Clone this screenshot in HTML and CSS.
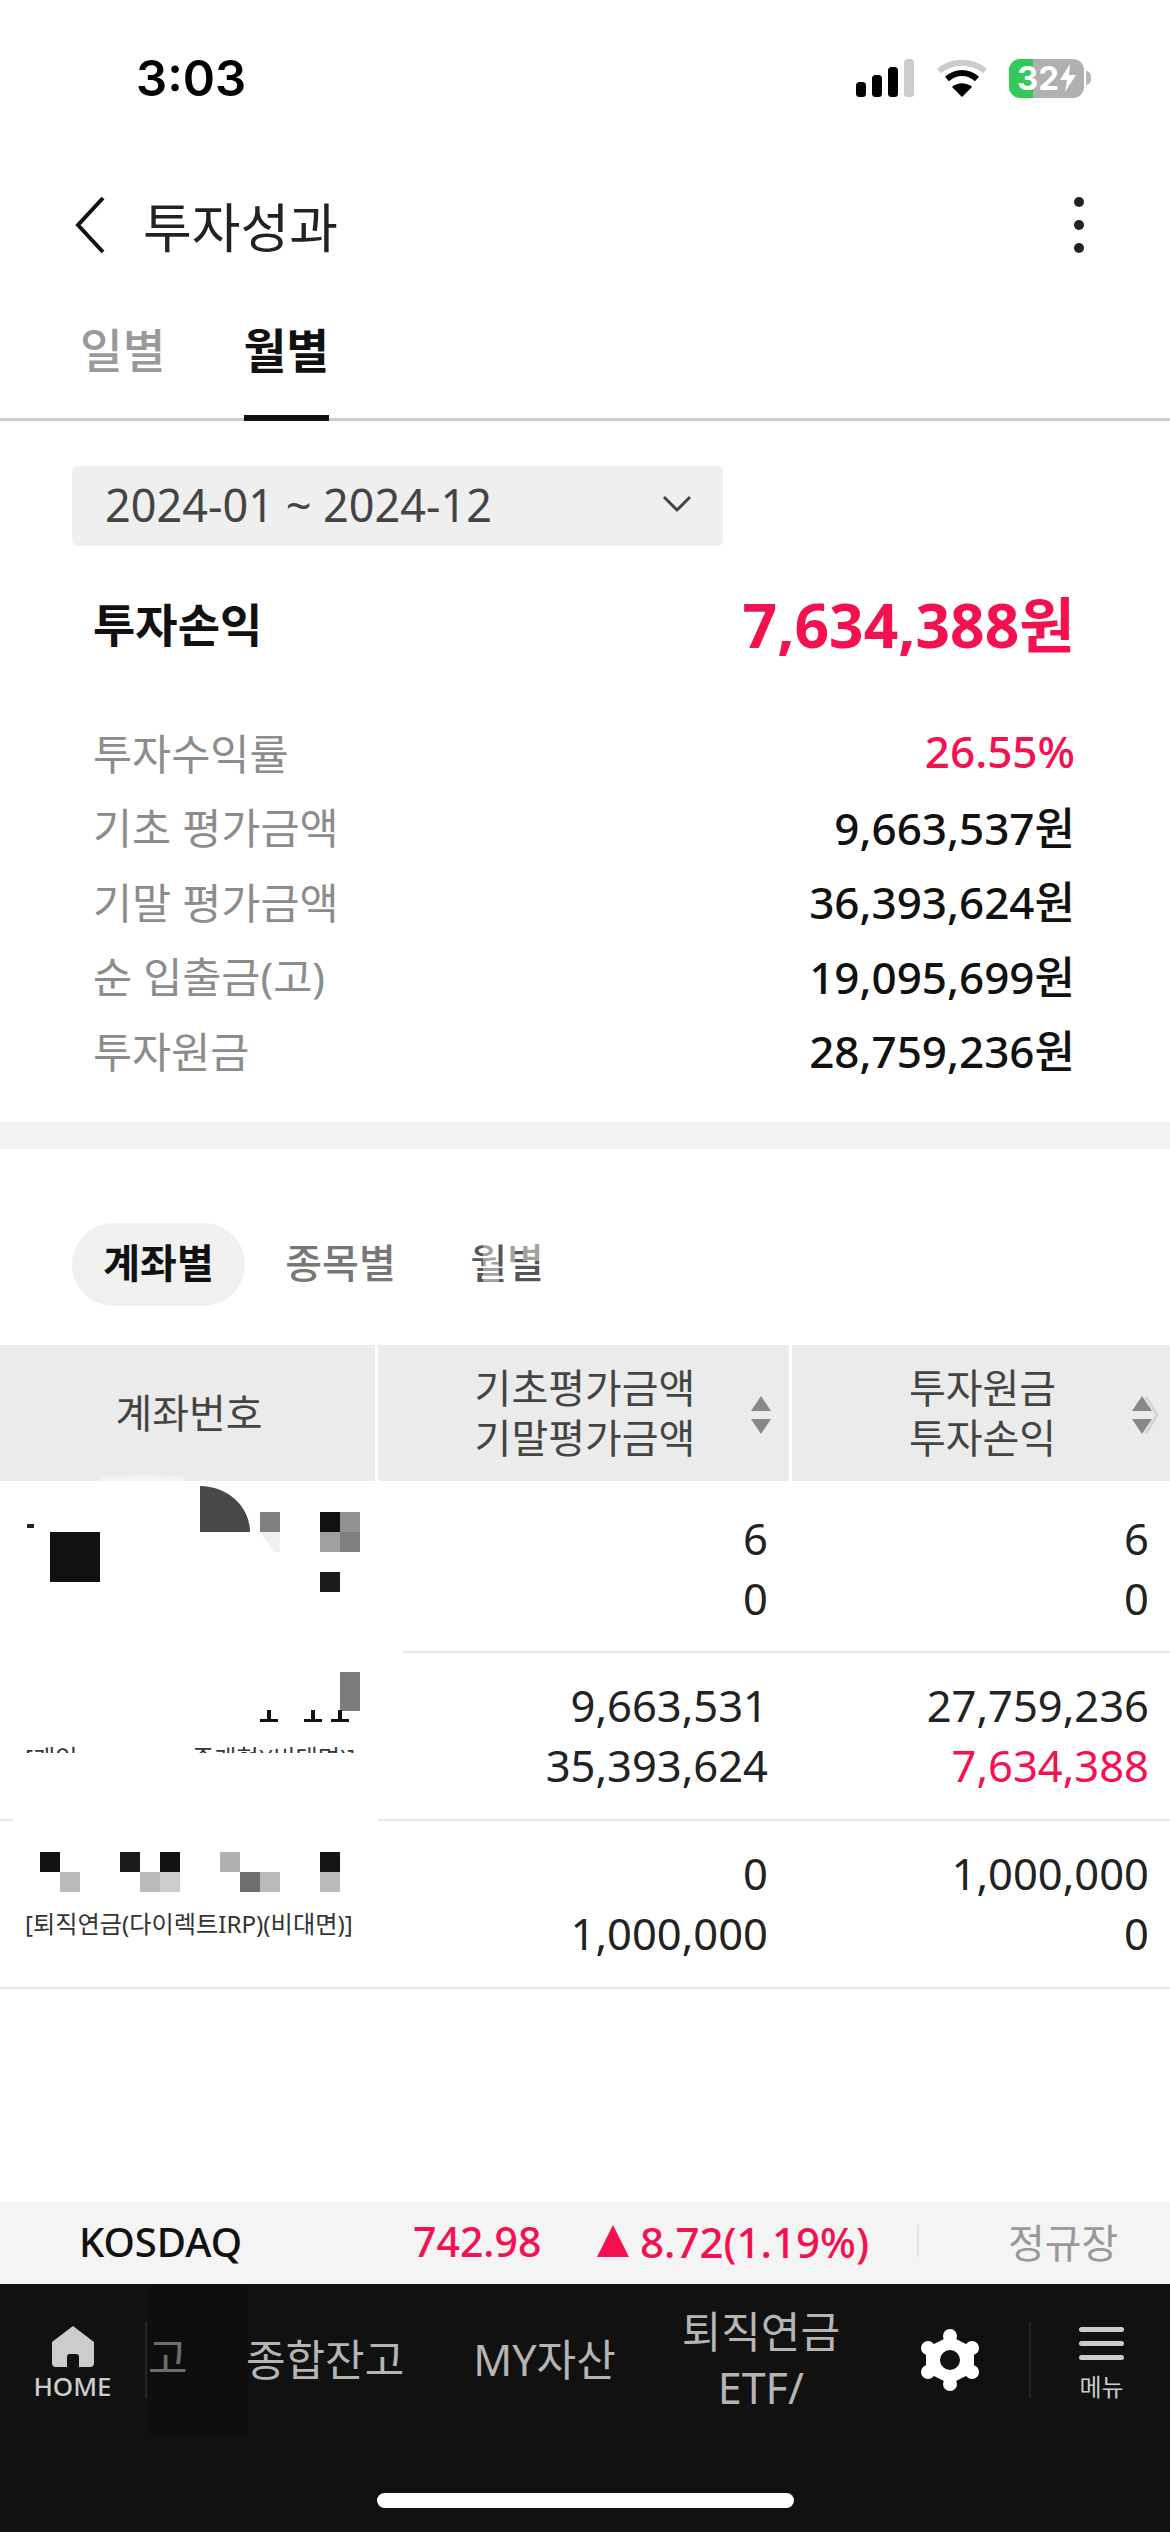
FILE: index.html
```html
<!DOCTYPE html>
<html lang="ko">
<head>
    <meta charset="UTF-8">
    <title>투자성과</title>
    <link rel="stylesheet" href="styles.css">
</head>
<body>
    <div class="status-bar">
        <span class="time">3:03</span>
        <div class="status-icons">
            <svg class="signal" width="58" height="38" viewBox="0 0 58 38">
                <rect x="0" y="23" width="10" height="15" rx="3.5" fill="#000"/>
                <rect x="16" y="16" width="10" height="22" rx="3.5" fill="#000"/>
                <rect x="32" y="8" width="10" height="30" rx="3.5" fill="#000"/>
                <rect x="48" y="0" width="10" height="38" rx="3.5" fill="#ccc"/>
            </svg>
            <svg class="wifi" width="50" height="38" viewBox="0 0 50 38">
                <path d="M2 12 C15 1 35 1 48 12" fill="none" stroke="#ccc" stroke-width="6"/>
                <path d="M10 20 C19 12 31 12 40 20" fill="none" stroke="#000" stroke-width="6"/>
                <path d="M25 38 L15 28 C21 23 29 23 35 28 Z" fill="#000"/>
            </svg>
            <div class="battery">
                <span class="battery-text">32</span>
                <svg width="16" height="28" viewBox="0 0 16 28"><path d="M10 0 L0 16 H7 L5 28 L16 11 H9 Z" fill="#fff"/></svg>
            </div>
            <span class="battery-nub"></span>
        </div>
    </div>

    <header class="top-bar">
        <svg class="back" width="34" height="60" viewBox="0 0 34 60">
            <path d="M30 3 L5 30 L30 57" fill="none" stroke="#111" stroke-width="4"/>
        </svg>
        <h1>투자성과</h1>
        <div class="more"><i></i><i></i><i></i></div>
    </header>

    <nav class="tabs">
        <a>일별</a>
        <a class="active">월별</a>
    </nav>

    <section class="summary">
        <div class="period">
            <span>2024-01 ~ 2024-12</span>
            <svg width="30" height="18" viewBox="0 0 30 18"><path d="M2 2 L15 15 L28 2" fill="none" stroke="#444" stroke-width="3"/></svg>
        </div>
        <div class="profit">
            <span class="profit-label">투자손익</span>
            <span class="profit-value">7,634,388원</span>
        </div>
        <dl class="details">
            <div><dt>투자수익률</dt><dd class="up">26.55%</dd></div>
            <div><dt>기초 평가금액</dt><dd>9,663,537원</dd></div>
            <div><dt>기말 평가금액</dt><dd>36,393,624원</dd></div>
            <div><dt>순 입출금(고)</dt><dd>19,095,699원</dd></div>
            <div><dt>투자원금</dt><dd>28,759,236원</dd></div>
        </dl>
    </section>

    <div class="band"></div>

    <section class="breakdown">
        <div class="pills">
            <span class="pill active">계좌별</span>
            <span class="pill">종목별</span>
            <span class="pill pill-pixel">월별<i class="px-a"></i><i class="px-b"></i><i class="px-c"></i></span>
        </div>

        <div class="table">
            <div class="table-row table-head">
                <div class="th th-account">계좌번호</div>
                <div class="th">
                    <span>기초평가금액<br>기말평가금액</span>
                    <svg class="sort" width="22" height="38" viewBox="0 0 22 38">
                        <path d="M11 0 L21 15 H1 Z M1 23 H21 L11 38 Z" fill="#888"/>
                    </svg>
                </div>
                <div class="th">
                    <span>투자원금<br>투자손익</span>
                    <svg class="sort sort-last" width="28" height="38" viewBox="0 0 28 38">
                        <path d="M11 0 L21 15 H1 Z M1 23 H21 L11 38 Z" fill="#888"/>
                        <path d="M15 1 L26 19 L15 37" fill="none" stroke="#d4d4d4" stroke-width="3"/>
                    </svg>
                </div>
            </div>

            <div class="table-body">
                <div class="table-row row-first">
                    <div class="td"></div>
                    <div class="td num">6<br>0</div>
                    <div class="td num">6<br>0</div>
                </div>
                <div class="table-row row-second">
                    <div class="td"></div>
                    <div class="td num">9,663,531<br>35,393,624</div>
                    <div class="td num">27,759,236<br><span class="up">7,634,388</span></div>
                </div>
                <div class="table-row row-third">
                    <div class="td"></div>
                    <div class="td num">0<br>1,000,000</div>
                    <div class="td num">1,000,000<br>0</div>
                </div>

                <!-- masked account numbers, sit on top of the rows -->
                <div class="mask">
                    <i class="m" style="left:27px;top:43px;width:7px;height:4px;background:#222"></i>
                    <i class="m" style="left:50px;top:51px;width:50px;height:50px;background:#111"></i>
                    <i class="m m-curve" style="left:200px;top:5px;width:50px;height:46px;background:#484848"></i>
                    <i class="m" style="left:260px;top:31px;width:20px;height:20px;background:#808080"></i>
                    <i class="m m-fade" style="left:260px;top:51px;width:20px;height:20px;background:#f0f0f0"></i>
                    <i class="m" style="left:320px;top:31px;width:20px;height:20px;background:#111"></i>
                    <i class="m" style="left:340px;top:31px;width:20px;height:20px;background:#919191"></i>
                    <i class="m" style="left:320px;top:51px;width:20px;height:20px;background:#a0a0a0"></i>
                    <i class="m" style="left:340px;top:51px;width:20px;height:20px;background:#7f7f7f"></i>
                    <i class="m" style="left:320px;top:91px;width:20px;height:20px;background:#1c1c1c"></i>

                    <i class="m" style="left:340px;top:191px;width:20px;height:39px;background:#7c7c7c"></i>
                    <i class="m m-tee" style="left:260px;top:229px"></i>
                    <i class="m m-tee" style="left:304px;top:229px"></i>
                    <i class="m m-tee" style="left:331px;top:229px"></i>
                    <span class="m sliver" style="left:25px;top:265px">[개인</span>
                    <span class="m sliver" style="left:192px;top:265px">중개형)(비대면)]</span>
                    <i class="m sliver-cover"></i>

                    <i class="m" style="left:40px;top:371px;width:20px;height:20px;background:#111"></i>
                    <i class="m" style="left:60px;top:391px;width:20px;height:20px;background:#bbb"></i>
                    <i class="m" style="left:120px;top:371px;width:20px;height:20px;background:#1a1a1a"></i>
                    <i class="m" style="left:140px;top:391px;width:20px;height:20px;background:#bbb"></i>
                    <i class="m" style="left:160px;top:371px;width:20px;height:20px;background:#111"></i>
                    <i class="m" style="left:160px;top:391px;width:20px;height:20px;background:#ccc"></i>
                    <i class="m" style="left:220px;top:371px;width:20px;height:20px;background:#b0b0b0"></i>
                    <i class="m" style="left:240px;top:391px;width:20px;height:20px;background:#6e6e6e"></i>
                    <i class="m" style="left:260px;top:391px;width:20px;height:20px;background:#bbb"></i>
                    <i class="m" style="left:320px;top:371px;width:20px;height:20px;background:#151515"></i>
                    <i class="m" style="left:320px;top:391px;width:20px;height:20px;background:#bbb"></i>
                    <span class="m account-type" style="left:25px;top:427px">[퇴직연금(다이렉트IRP)(비대면)]</span>
                </div>
            </div>
        </div>
    </section>

    <div class="ticker">
        <span class="ticker-name">KOSDAQ</span>
        <span class="ticker-price">742.98</span>
        <span class="ticker-tri"></span>
        <span class="ticker-change">8.72(1.19%)</span>
        <span class="ticker-div"></span>
        <span class="ticker-state">정규장</span>
    </div>

    <footer class="bottom-nav">
        <div class="nav-row">
            <div class="nav-home">
                <svg width="42" height="42" viewBox="0 0 42 42">
                    <path d="M21 0 L42 16 V37 Q42 41 38 41 H27 V31 Q27 28 24 28 H18 Q15 28 15 31 V41 H4 Q0 41 0 37 V16 Z" fill="#ccc"/>
                </svg>
                <span>HOME</span>
            </div>
            <span class="nav-div"></span>
            <span class="nav-clip">고</span>
            <a class="nav-link link-total">종합잔고</a>
            <a class="nav-link link-my">MY자산</a>
            <a class="nav-link link-pension">퇴직연금<br>ETF/</a>
            <svg class="gear" width="60" height="62" viewBox="0 0 60 62">
                <path fill-rule="evenodd" fill="#fff" d="M30 7 L54 19 V43 L30 55 L6 43 V19 Z M30 21 A10 10 0 1 0 30 41 A10 10 0 1 0 30 21 Z"/>
                <circle cx="30" cy="7" r="7" fill="#fff"/><circle cx="30" cy="55" r="7" fill="#fff"/>
                <circle cx="52" cy="19" r="7" fill="#fff"/><circle cx="52" cy="43" r="7" fill="#fff"/>
                <circle cx="8" cy="19" r="7" fill="#fff"/><circle cx="8" cy="43" r="7" fill="#fff"/>
            </svg>
            <span class="nav-div div-menu"></span>
            <div class="nav-menu">
                <div class="bars"><i></i><i></i><i></i></div>
                <span>메뉴</span>
            </div>
        </div>
        <div class="home-indicator"></div>
    </footer>
</body>
</html>
```

FILE: styles.css
```css
* {
    margin: 0;
    padding: 0;
    box-sizing: border-box;
}

body {
    width: 1170px;
    height: 2532px;
    overflow: hidden;
    display: flex;
    flex-direction: column;
    background: #fff;
    color: #111;
    font-family: 'Noto Sans', 'Noto Sans CJK KR', sans-serif;
}

.up {
    color: #f5104f;
}

/* status bar */
.status-bar {
    height: 160px;
    display: flex;
    align-items: center;
    justify-content: space-between;
    padding: 0 79px 4px 136px;
}

.time {
    font-family: 'Inter', sans-serif;
    font-size: 49px;
    font-weight: 600;
    color: #000;
}

.status-icons {
    display: flex;
    align-items: center;
    gap: 23px;
}

.battery {
    width: 75px;
    height: 39px;
    margin-left: -1px;
    border-radius: 11px;
    background: linear-gradient(90deg, #34c759 0 24px, #b0b0b0 24px);
    display: flex;
    align-items: center;
    justify-content: center;
    gap: 1px;
}

.battery-text {
    font-family: 'Inter', sans-serif;
    font-size: 33px;
    font-weight: 700;
    color: #fff;
    line-height: 1;
}

.battery-nub {
    width: 5px;
    height: 14px;
    margin-left: -21px;
    border-radius: 0 5px 5px 0;
    background: #b8b8b8;
}

/* title bar */
.top-bar {
    height: 130px;
    display: flex;
    align-items: center;
    padding: 0 86px 0 73px;
}

.top-bar h1 {
    flex: 1;
    margin-left: 36px;
    font-size: 53px;
    font-weight: 400;
    color: #222;
}

.more {
    display: flex;
    flex-direction: column;
    gap: 13px;
}

.more i {
    width: 10px;
    height: 10px;
    border-radius: 50%;
    background: #222;
}

/* day / month tabs */
.tabs {
    height: 131px;
    display: flex;
    gap: 78px;
    padding-left: 80px;
    border-bottom: 3px solid #ccc;
}

.tabs a {
    height: 131px;
    padding: 24px 0 0;
    font-size: 46.5px;
    font-weight: 500;
    line-height: 72px;
    color: #999;
}

.tabs a.active {
    color: #111;
    font-weight: 700;
    border-bottom: 6px solid #111;
}

/* summary */
.summary {
    height: 701px;
    padding-top: 45px;
}

.period {
    width: 651px;
    height: 80px;
    margin-left: 72px;
    padding: 0 31px 4px 33px;
    display: flex;
    align-items: center;
    justify-content: space-between;
    background: #efefef;
    border-radius: 6px;
    font-size: 45px;
    color: #444;
}

.profit {
    height: 114px;
    margin-top: 19px;
    padding: 0 95px 0 93px;
    display: flex;
    align-items: center;
    justify-content: space-between;
}

.profit-label {
    font-size: 46px;
    font-weight: 700;
}

.profit-value {
    font-size: 60.5px;
    font-weight: 700;
    color: #f5104f;
}

.details {
    margin-top: 35px;
    padding: 0 95px 0 93px;
}

.details div {
    height: 74.5px;
    display: flex;
    align-items: center;
    justify-content: space-between;
}

.details dt {
    font-size: 42.5px;
    color: #8c8c8c;
}

.details dd {
    font-size: 44px;
    font-weight: 500;
}

.band {
    height: 27px;
    background: #f2f2f2;
}

/* account table */
.breakdown {
    flex: 1;
}

.pills {
    height: 196px;
    display: flex;
    align-items: flex-start;
    padding: 74px 0 0 72px;
}

.pill {
    position: relative;
    width: 173px;
    height: 83px;
    margin-right: 9px;
    font-size: 40px;
    font-weight: 500;
    line-height: 79px;
    text-align: center;
    color: #777;
    border-radius: 42px;
}

.pill.active {
    background: #f0f0f0;
    color: #111;
    font-weight: 700;
}

.pill-pixel {
    width: 100px;
    margin-left: 21px;
    color: #555;
}

.pill-pixel i {
    position: absolute;
    background: rgba(255, 255, 255, 0.45);
}

.px-a { left: 26px; top: 20px; width: 16px; height: 44px; }
.px-b { left: 50px; top: 20px; width: 8px; height: 44px; }
.px-c { left: 66px; top: 22px; width: 24px; height: 16px; }

.table-row {
    display: grid;
    grid-template-columns: 375px 411px 378px;
    column-gap: 3px;
}

.table-head {
    height: 136px;
}

.th {
    position: relative;
    display: flex;
    align-items: center;
    justify-content: center;
    padding-left: 3px;
    text-align: center;
    background: #ebebeb;
    font-size: 40px;
    line-height: 50px;
    color: #444;
}

/* faint arc left in the header by the masking of the row below */
.th-account::after {
    content: '';
    position: absolute;
    left: 100px;
    bottom: 0;
    width: 85px;
    height: 6px;
    border-radius: 50% 50% 0 0;
    background: #f2f2f2;
}

.sort {
    position: absolute;
    right: 17px;
    top: 51px;
}

.sort-last {
    right: 11px;
}

.table-body {
    position: relative;
}

.row-first { height: 172px; border-bottom: 2px solid #e8e8e8; }
.row-second { height: 168px; border-bottom: 2px solid #e8e8e8; }
.row-third { height: 168px; border-bottom: 2px solid #e8e8e8; }

.td {
    padding: 27px 21px 0 0;
    text-align: right;
}

.num {
    font-size: 43.5px;
    line-height: 60px;
    color: #222;
}

.row-second .td,
.row-third .td {
    padding-top: 22px;
}

.mask {
    position: absolute;
    left: 0;
    top: 0;
    width: 378px;
    height: 508px;
}

/* white patches that hide the row lines under the account column */
.mask::before {
    content: '';
    position: absolute;
    left: 13px;
    top: 0;
    right: 0;
    height: 342px;
    background: #fff;
}

.mask::after {
    content: '';
    position: absolute;
    left: 0;
    top: 168px;
    width: 403px;
    height: 6px;
    background: #fff;
}

.m {
    position: absolute;
    z-index: 1;
}

.m-curve {
    border-top-right-radius: 100% 100%;
}

.m-fade {
    clip-path: polygon(0 0, 100% 0, 100% 100%, 70% 100%);
}

.m-tee {
    width: 18px;
    height: 12px;
    background: linear-gradient(#111, #111) center top / 4px 9px no-repeat,
        linear-gradient(#111, #111) center bottom / 18px 3px no-repeat;
}

.sliver {
    font-size: 24.2px;
    line-height: 24px;
    white-space: nowrap;
    color: #333;
}

.sliver-cover {
    left: 13px;
    top: 272px;
    width: 365px;
    height: 30px;
    background: #fff;
}

.account-type {
    font-size: 24.2px;
    line-height: 32px;
    white-space: nowrap;
    color: #333;
}

/* index ticker */
.ticker {
    height: 82px;
    display: flex;
    align-items: center;
    padding: 0 0 4px 79px;
    background: #f4f4f4;
    font-size: 40px;
}

.ticker-name {
    width: 334px;
    font-weight: 500;
}

.ticker-price {
    width: 184px;
    font-size: 41px;
    font-weight: 500;
    color: #f5104f;
}

.ticker-tri {
    width: 0;
    height: 0;
    border-left: 16px solid transparent;
    border-right: 16px solid transparent;
    border-bottom: 32px solid #f5104f;
}

.ticker-change {
    width: 277px;
    margin-left: 11px;
    font-size: 42px;
    font-weight: 500;
    color: #f5104f;
}

.ticker-div {
    width: 2px;
    height: 32px;
    background: #e2e2e2;
}

.ticker-state {
    margin-left: 89px;
    color: #999;
}

/* bottom nav */
.bottom-nav {
    height: 248px;
    background: #111;
    color: #b5b5b5;
}

.nav-row {
    height: 152px;
    display: flex;
    align-items: center;
}

.nav-home {
    width: 145px;
    padding-top: 10px;
    display: flex;
    flex-direction: column;
    align-items: center;
    color: #ccc;
    font-size: 26px;
    line-height: 36px;
    font-weight: 500;
}

.nav-div {
    width: 2px;
    height: 76px;
    background: #252525;
}

.nav-clip {
    width: 99px;
    align-self: stretch;
    padding-top: 44px;
    margin-left: 1px;
    font-size: 43px;
    line-height: 60px;
    color: #6e6e6e;
    background: #0e0e0e;
}

.nav-link {
    font-size: 43px;
    line-height: 56px;
    text-align: center;
}

.link-total { margin-left: -1px; }
.link-my { margin-left: 69px; }
.link-pension { margin-left: 66px; }

.gear {
    margin-left: 80px;
}

.div-menu {
    margin-left: 49px;
}

.nav-menu {
    margin-left: 48px;
    padding-top: 10px;
    display: flex;
    flex-direction: column;
    align-items: center;
    gap: 8px;
    font-size: 24px;
    color: #ccc;
}

.bars {
    display: flex;
    flex-direction: column;
    gap: 9px;
}

.bars i {
    display: block;
    width: 45px;
    height: 5px;
    border-radius: 3px;
    background: #ccc;
}

.home-indicator {
    width: 417px;
    height: 15px;
    margin: 57px auto 0;
    border-radius: 8px;
    background: #fff;
}
```
